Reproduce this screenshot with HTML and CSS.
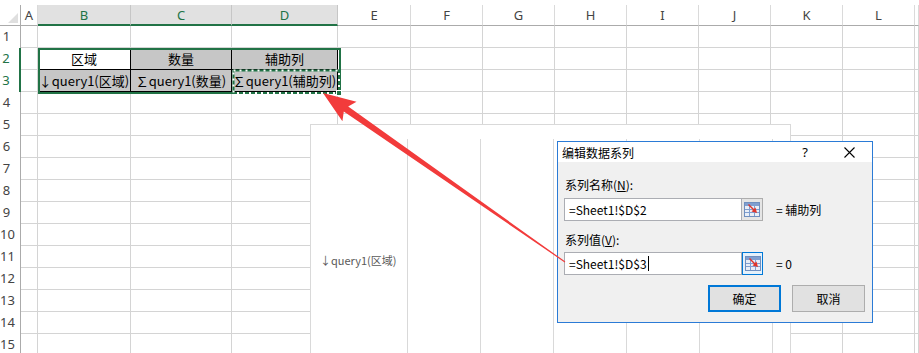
FILE: index.html
```html
<!DOCTYPE html>
<html>
<head>
	<meta charset='utf-8'>
	<title>编辑数据系列</title>
	<link rel="stylesheet" href="styles.css">
</head>
<body>
<div class="page">

	<div class="sheet" id="sheet"></div>

	<div class="selection"></div>
	<svg class="marquee" width="919" height="353">
		<rect x="233.5" y="70.5" width="105.5" height="22.5" fill="none" stroke="#217346" stroke-width="2"/>
		<rect x="233.5" y="70.5" width="105.5" height="22.5" fill="none" stroke="#fff" stroke-width="2" stroke-dasharray="2 4"/>
		<rect x="336.5" y="90.5" width="5" height="5" fill="#217346" stroke="#fff" stroke-width="1"/>
	</svg>

	<div class="chart">
		<div class="axis"><span>↓query1(区域)</span></div>
		<div class="plot">
			<span></span><span></span><span></span><span></span><span></span><span></span>
		</div>
	</div>

	<div class="dialog">
		<div class="titlebar">
			<span class="title">编辑数据系列</span>
			<span class="help">?</span>
			<svg class="close" width="11" height="11" viewBox="0 0 11 11">
				<path d="M0.5 0.5 L10.5 10.5 M10.5 0.5 L0.5 10.5" stroke="#000" stroke-width="1.1"/>
			</svg>
		</div>
		<div class="body">
			<div class="lbl">系列名称(<u>N</u>):</div>
			<div class="row">
				<div class="input">=Sheet1!$D$2</div>
				<div class="refbtn">
					<svg width="16" height="15" viewBox="0 0 16 15">
						<rect x="0.5" y="0.5" width="15" height="14" fill="#e8eef7" stroke="#6f8fbf"/>
						<rect x="1" y="1" width="14" height="3" fill="#7f9fd0"/>
						<path d="M1 7.5 H15 M1 10.5 H15 M5.5 4 V14 M10.5 4 V14" stroke="#7f9fd0"/>
						<path d="M4 3 L9 8 L7.5 9.5 L13 11 L11.5 5.5 L10 7 L5 2 Z" fill="#e0352b"/>
					</svg>
				</div>
				<div class="eq">= 辅助列</div>
			</div>
			<div class="lbl lbl2">系列值(<u>V</u>):</div>
			<div class="row">
				<div class="input">=Sheet1!$D$3<span class="caret"></span></div>
				<div class="refbtn focus">
					<svg width="16" height="15" viewBox="0 0 16 15">
						<rect x="0.5" y="0.5" width="15" height="14" fill="#e8eef7" stroke="#6f8fbf"/>
						<rect x="1" y="1" width="14" height="3" fill="#7f9fd0"/>
						<path d="M1 7.5 H15 M1 10.5 H15 M5.5 4 V14 M10.5 4 V14" stroke="#7f9fd0"/>
						<path d="M4 3 L9 8 L7.5 9.5 L13 11 L11.5 5.5 L10 7 L5 2 Z" fill="#e0352b"/>
					</svg>
				</div>
				<div class="eq">= 0</div>
			</div>
			<div class="buttons">
				<div class="btn ok">确定</div>
				<div class="btn">取消</div>
			</div>
		</div>
	</div>

	<svg class="arrow" width="919" height="353">
		<polygon fill="#f23b3b" points="323,93 356.5,101.8 348.2,106.4 565.3,261.6 564.7,262.4 343.8,111.6 342.4,121.2"/>
	</svg>
</div>

<script>
	var letters = ['', 'A', 'B', 'C', 'D', 'E', 'F', 'G', 'H', 'I', 'J', 'K', 'L', '']
	var data = {
		'2B': '区域', '2C': '数量', '2D': '辅助列',
		'3B': '↓query1(区域)', '3C': '∑query1(数量)', '3D': '∑query1(辅助列)'
	}
	var sheet = document.getElementById("sheet")

	function add (cls, text) {
		var d = document.createElement("div")
		d.className = cls
		if (text) d.textContent = text
		sheet.appendChild(d)
		return d
	}

	// header row
	for (let i = 0; i < letters.length; i++) {
		if (i == 0) {
			add("cell corner").appendChild(document.createElement("span"))
		}
		else {
			let sel = (letters[i] == 'B' || letters[i] == 'C' || letters[i] == 'D') ? " sel" : ""
			add("cell ch" + sel, letters[i])
		}
	}

	// rows
	for (let r = 1; r <= 15; r++) {
		add("cell rh" + ((r == 2 || r == 3) ? " sel" : ""), String(r))
		for (let i = 1; i < letters.length; i++) {
			let key = r + letters[i]
			if (data.hasOwnProperty(key)) {
				add("cell tc" + (key == '2B' ? "" : " gray"), data[key])
			}
			else add("cell")
		}
	}
</script>
</body>
</html>
```

FILE: styles.css
```css
body{
	margin: 0;
	background: #fff;
}
.page{
	position: relative;
	width: 919px;
	height: 353px;
	overflow: hidden;
	padding-top: 5px;
	box-sizing: border-box;
	font-family: "Noto Sans CJK SC", sans-serif;
}
.sheet{
	display: grid;
	grid-template-columns: 21px 17px 93px 101px 106px 73px repeat(7, 72px) 1fr;
	grid-template-rows: 21px;
	grid-auto-rows: 22px;
}
.cell{
	box-sizing: border-box;
	border-right: 1px solid #d4d4d4;
	border-bottom: 1px solid #d4d4d4;
	font-size: 13px;
	line-height: 21px;
	text-align: center;
	white-space: nowrap;
	color: #000;
}
.corner{
	position: relative;
	border-right: 1px solid #ababab;
	border-bottom: 1px solid #ababab;
}
.corner span{
	position: absolute;
	right: 2px;
	bottom: 2px;
	border-left: 10px solid transparent;
	border-bottom: 10px solid #dfdfdf;
}
.ch{
	font-family: "Noto Sans", sans-serif;
	color: #444;
	border-right-color: #dadada;
	border-bottom: 1px solid #ababab;
}
.ch.sel{
	background: #e1e1e1;
	border-right-color: #c6c6c6;
	border-bottom: 2px solid #217346;
	color: #217346;
}
.rh{
	font-family: "Noto Sans", sans-serif;
	color: #444;
	border-bottom: none;
	border-right: 1px solid #ababab;
	padding-right: 7px;
	line-height: 20px;
}
.rh.sel{
	border-right: 2px solid #217346;
	color: #217346;
}
.tc{
	border-right-color: #000;
	border-bottom-color: #000;
}
.gray{
	background: #c6c6c6;
}

.selection{
	position: absolute;
	left: 38px;
	top: 48px;
	width: 303px;
	height: 46px;
	box-sizing: border-box;
	border: 2px solid #217346;
}
.marquee, .arrow{
	position: absolute;
	left: 0;
	top: 0;
}

.chart{
	position: absolute;
	left: 310px;
	top: 124px;
	width: 481px;
	height: 240px;
	box-sizing: border-box;
	background: #fff;
	border: 1px solid #d9d9d9;
	padding-top: 14px;
	display: flex;
}
.axis{
	flex: 0 0 96px;
	padding: 113px 0 0 9px;
	box-sizing: border-box;
	font-size: 11px;
	line-height: 16px;
	color: #595959;
	white-space: nowrap;
}
.plot{
	display: flex;
	flex: 1;
}
.plot span{
	flex: 0 0 73px;
	box-sizing: border-box;
	border-left: 1px solid #d9d9d9;
}

.dialog{
	position: absolute;
	left: 557px;
	top: 141px;
	width: 316px;
	height: 182px;
	box-sizing: border-box;
	border: 1px solid #2b7bd6;
	background: #f0f0f0;
	font-size: 12px;
	color: #000;
	display: flex;
	flex-direction: column;
}
.titlebar{
	height: 20px;
	background: #fff;
	display: flex;
	align-items: center;
	padding: 0 17px 0 4px;
}
.title{
	flex: 1;
}
.help{
	font-family: "Noto Sans", sans-serif;
	font-size: 13px;
	margin-right: 36px;
}
.body{
	padding: 15px 7px 0 6px;
	display: flex;
	flex-direction: column;
}
.lbl{
	line-height: 16px;
	margin-left: 1px;
}
.lbl2{
	margin-top: 11px;
}
.row{
	display: flex;
	align-items: center;
	margin-top: 5px;
}
.lbl2 + .row{
	margin-top: 4px;
}
.input{
	width: 178px;
	height: 23px;
	box-sizing: border-box;
	background: #fff;
	border: 1px solid #abadb3;
	padding-left: 4px;
	line-height: 21px;
	display: flex;
	align-items: center;
}
.caret{
	display: inline-block;
	width: 0;
	height: 15px;
	border-left: 1px solid #000;
	margin-left: 1px;
}
.refbtn{
	width: 21px;
	height: 23px;
	box-sizing: border-box;
	background: #e5e5e5;
	border: 1px solid #adadad;
	border-left: none;
	display: flex;
	align-items: center;
	justify-content: center;
}
.refbtn.focus{
	background: #e5f1fb;
	border: 1px solid #0078d7;
}
.eq{
	margin-left: 13px;
}
.buttons{
	display: flex;
	justify-content: flex-end;
	gap: 11px;
	margin-top: 10px;
}
.btn{
	width: 73px;
	height: 27px;
	box-sizing: border-box;
	background: #e1e1e1;
	border: 1px solid #adadad;
	display: flex;
	align-items: center;
	justify-content: center;
}
.btn.ok{
	border: 2px solid #0078d7;
}
```
